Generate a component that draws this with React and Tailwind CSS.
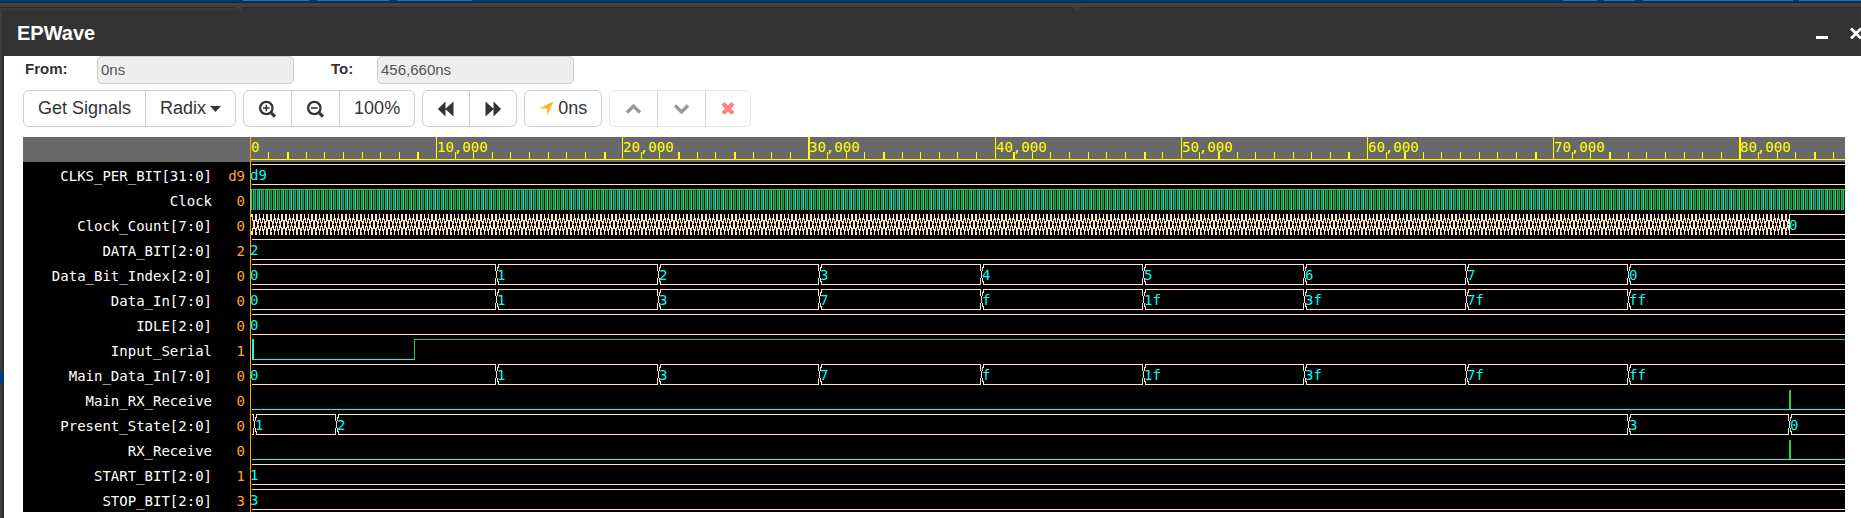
import React from "react";

const SCALE = 0.01862;
const HEADER = 25;
const ROW = 25;
const BUS = "#ffe4c4";
const LOW = "#00ffff";
const HIGH = "#32cd32";

const byteSteps = [
  [0, "0"], [13250, "1"], [21930, "3"], [30610, "7"], [39290, "f"],
  [47970, "1f"], [56650, "3f"], [65330, "7f"], [74010, "ff"],
];

const signals = [
  { name: "CLKS_PER_BIT[31:0]", value: "d9", kind: "bus", steps: [[0, "d9"]] },
  { name: "Clock", value: "0", kind: "clock" },
  { name: "Clock_Count[7:0]", value: "0", kind: "count" },
  { name: "DATA_BIT[2:0]", value: "2", kind: "bus", steps: [[0, "2"]] },
  {
    name: "Data_Bit_Index[2:0]", value: "0", kind: "bus",
    steps: [
      [0, "0"], [13250, "1"], [21930, "2"], [30610, "3"], [39290, "4"],
      [47970, "5"], [56650, "6"], [65330, "7"], [74010, "0"],
    ],
  },
  { name: "Data_In[7:0]", value: "0", kind: "bus", steps: byteSteps },
  { name: "IDLE[2:0]", value: "0", kind: "bus", steps: [[0, "0"]] },
  { name: "Input_Serial", value: "1", kind: "serial" },
  { name: "Main_Data_In[7:0]", value: "0", kind: "bus", steps: byteSteps },
  { name: "Main_RX_Receive", value: "0", kind: "pulse" },
  {
    name: "Present_State[2:0]", value: "0", kind: "bus",
    steps: [[0, ""], [240, "1"], [4620, "2"], [74010, "3"], [82690, "0"]],
  },
  { name: "RX_Receive", value: "0", kind: "pulse" },
  { name: "START_BIT[2:0]", value: "1", kind: "bus", steps: [[0, "1"]] },
  { name: "STOP_BIT[2:0]", value: "3", kind: "bus", steps: [[0, "3"]] },
];

const END_X = 4000;

function WaveText({ x, y, fill, children }) {
  return (
    <text x={x} y={y} fill={fill} className="font-['DejaVu_Sans_Mono',monospace] text-[14px]">
      {children}
    </text>
  );
}

function BusWave({ top, steps }) {
  const mid = top + 10.5;
  const hi = top + 0.5;
  const lo = top + 20.5;
  return steps.map(([time, label], i) => {
    const start = Math.floor(time * SCALE);
    const next = steps[i + 1];
    const end = next ? Math.floor(next[0] * SCALE) : END_X;
    const left = i === 0 ? `M2 ${hi}` : `M${start} ${mid}L${start + 2} ${hi + 3}V${hi}`;
    const leftLow = i === 0 ? `M2 ${lo}` : `M${start} ${mid}L${start + 2} ${lo - 3}V${lo}`;
    return (
      <g key={i}>
        <path
          d={`${left}H${end - 1}V${hi + 3}L${end + 1} ${mid}${leftLow}H${end - 1}V${lo - 3}L${end + 1} ${mid}`}
          fill="none" stroke={BUS} shapeRendering="crispEdges"
        />
        {label && <WaveText x={i === 0 ? 0 : start + 1} y={top + 16} fill={LOW}>{label}</WaveText>}
      </g>
    );
  });
}

const clockShades = [
  [1, 1], [0.1, 1], [0.95, 0], [0.5, 0], [0.75, 0.8], [0.1, 0], [0.85, 0.3], [0.55, 0.6],
];

const clockColumns = Array.from({ length: 2400 }, (_, i) => {
  const [light, hue] = clockShades[i % clockShades.length];
  const drift = 0.5 + 0.5 * Math.cos((2 * Math.PI * i) / 46);
  const w = 0.6 * hue + 0.4 * drift;
  const r = 45 * (1 - w) * light;
  const g = (205 + 25 * w) * light;
  const b = (60 + 155 * w) * light;
  return `rgb(${Math.round(r)},${Math.round(g)},${Math.round(b)})`;
});

function ClockWave({ top }) {
  return (
    <g shapeRendering="crispEdges">
      {clockColumns.map((fill, i) => (
        <rect key={i} x={i + 1} y={top + 1} width="1" height="20" fill={fill} />
      ))}
      <path d={`M1 ${top + 0.5}H${END_X}`} stroke={HIGH} />
    </g>
  );
}

function CountWave({ top }) {
  const end = 1539;
  const hi = top;
  const lo = top + 21;
  let crossings = "";
  for (let x = 4; x < end - 1; x += 3.75) {
    crossings += `M${x - 2} ${hi}V${hi + 3}L${x + 2} ${lo - 3}V${lo}`;
    crossings += `M${x + 2} ${hi}V${hi + 3}L${x - 2} ${lo - 3}V${lo}`;
  }
  return (
    <g>
      <path d={crossings} fill="none" stroke={BUS} strokeWidth="1.2" shapeRendering="crispEdges" />
      <path
        d={`M${END_X} ${top + 0.5}H${end + 0.5}V${top + 20.5}H${END_X}`}
        fill="none" stroke={BUS} shapeRendering="crispEdges"
      />
      <WaveText x={end} y={top + 16} fill={LOW}>0</WaveText>
    </g>
  );
}

function SerialWave({ top }) {
  return (
    <g fill="none" shapeRendering="crispEdges">
      <path d={`M3 ${top}V${top + 20}`} stroke={LOW} strokeWidth="2" />
      <path d={`M2 ${top + 20.5}H164`} stroke={LOW} />
      <path d={`M164.5 ${top + 21}V${top + 0.5}H${END_X}`} stroke={HIGH} />
    </g>
  );
}

function PulseWave({ top }) {
  return (
    <g fill="none" shapeRendering="crispEdges">
      <path d={`M2 ${top + 20.5}H${END_X}`} stroke={LOW} />
      <path d={`M1540 ${top + 1}V${top + 20}`} stroke={HIGH} strokeWidth="2" />
    </g>
  );
}

const waves = { bus: BusWave, clock: ClockWave, count: CountWave, serial: SerialWave, pulse: PulseWave };
const wideTicks = new Set([2, 9, 19, 23, 26, 30, 34, 41, 48, 52, 59, 62, 69, 73, 80, 84]);

function Ruler() {
  return (
    <g>
      <rect width="100%" height={HEADER} fill="#696969" />
      <path d={`M0 22.5H${END_X}`} stroke="#ffff00" shapeRendering="crispEdges" />
      {Array.from({ length: 90 }, (_, k) => {
        const wide = wideTicks.has(k);
        const x = Math.floor(k * 1000 * SCALE + 0.3);
        const major = k % 10 === 0;
        return (
          <g key={k}>
            <rect
              x={x} y={major ? 0 : 15} width={wide ? 2 : 1} height={major ? 22 : 7}
              fill="#ffff00" shapeRendering="crispEdges"
            />
            {major && <WaveText x={x + 1} y={15} fill="#ffff00">{(k * 1000).toLocaleString("en-US")}</WaveText>}
          </g>
        );
      })}
    </g>
  );
}

function Waveforms() {
  return (
    <svg className="block h-[375px] w-full" role="img" aria-label="Signal waveforms">
      <Ruler />
      {signals.map((s, i) => {
        const Wave = waves[s.kind];
        return <Wave key={s.name} top={HEADER + 2 + i * ROW} steps={s.steps} />;
      })}
      <rect width="1" height="375" fill="#ffa500" shapeRendering="crispEdges" />
    </svg>
  );
}

function ZoomIcon({ plus }) {
  return (
    <svg width="19" height="18" viewBox="0 0 19 18" fill="none" stroke="#333">
      <circle cx="8.3" cy="8" r="6.2" strokeWidth="2.3" />
      <path d="M12.6 12.4L17 16.6" strokeWidth="3" />
      <path d={plus ? "M5 8h6.6M8.3 4.7v6.6" : "M5 8h6.6"} strokeWidth="1.6" />
    </svg>
  );
}

function SkipIcon({ forward }) {
  return (
    <svg width="18" height="16" viewBox="0.5 0 18 16" fill="#333">
      <path d={forward ? "M2 .5l8 7.2V.5l7.6 7.5-7.6 7.5V8.300L2 15.500z" : "M17 .5L9 7.700V.5L1.400 8 9 15.500V8.300l8 7.200z"} />
    </svg>
  );
}

function Chevron({ down }) {
  return (
    <svg width="19" height="12" viewBox="0 0 19 12" fill="none" stroke="#333" strokeWidth="3.4">
      <path d={down ? "M3 2.500l6.500 6.400L16 2.500" : "M3 9.500l6.500-6.400L16 9.500"} />
    </svg>
  );
}

function Group({ children }) {
  return <div className="flex">{children}</div>;
}

function ToolButton({ label, disabled, children }) {
  return (
    <button
      type="button" aria-label={label} disabled={disabled}
      className="-ml-px flex h-[37px] items-center justify-center gap-1 border border-[#ccc] bg-white px-3.5 text-[18px] whitespace-nowrap text-[#333] first:ml-0 first:rounded-l-md last:rounded-r-md disabled:opacity-50"
    >
      {children}
    </button>
  );
}

function Field({ id, label, value, labelClass }) {
  return (
    <>
      <label htmlFor={id} className={`text-[15px] leading-[26px] font-bold text-[#333] ${labelClass}`}>{label}</label>
      <input
        id={id} readOnly value={value}
        className="h-7 w-[197px] rounded-[5px] border border-[#ccc] bg-[#eee] px-[3px] pb-0.5 text-[15px] text-[#555]"
      />
    </>
  );
}

export default function App() {
  return (
    <div className="flex min-h-screen flex-col overflow-hidden bg-[#3f3f3f] font-['Liberation_Sans',Arial,sans-serif]">
      <div className="flex h-0.5 bg-[#003a70]">
        <div className="ml-[243px] h-px w-[66px] bg-[#2a70a8]" />
        <div className="ml-2 h-px w-[72px] bg-[#2a70a8]" />
        <div className="ml-2 h-px w-[75px] bg-[#2a70a8]" />
        <div className="ml-auto h-px w-[34px] bg-[#2a70a8]" />
        <div className="ml-[7px] h-px w-[31px] bg-[#2a70a8]" />
        <div className="ml-2 h-px w-[150px] bg-[#2a70a8]" />
        <div className="ml-[6px] h-px w-[62px] bg-[#2a70a8]" />
      </div>
      <div className="flex h-[9px] gap-2 border-t border-[#222] bg-linear-to-b from-[#454545] to-[#363636] pt-1">
        <div className="w-[235px] border-t border-r border-[#2c2c2c]" />
        <div className="w-[830px] border-x border-t border-[#2c2c2c] bg-[#323232]" />
        <div className="flex-1 border-t border-l border-[#2c2c2c] bg-[#323232]" />
      </div>
      <div className="flex flex-1">
        <div className="w-1 shrink-0 bg-linear-to-r from-[#454442] to-[#2a2a2a] pt-[359px]">
          <div className="h-[15px] bg-[#0a3a78]" />
        </div>
        <section className="flex min-w-0 flex-1 flex-col bg-white">
          <header className="flex h-[45px] items-center justify-between overflow-hidden bg-[#333] pb-0.5 pl-[13px] text-white">
            <h1 className="text-[20px] leading-6 font-bold">EPWave</h1>
            <div className="flex items-center gap-[22px]">
              <button type="button" aria-label="Minimize">
                <svg width="12" height="12" viewBox="0 0 12 12"><path d="M0 10.500h12" stroke="#fff" strokeWidth="3" /></svg>
              </button>
              <button type="button" aria-label="Close" className="-mr-px">
                <svg width="12" height="12" viewBox="0 0 12 12"><path d="M1 1.500l10 10M11 1.500L1 11.500" stroke="#fff" strokeWidth="2.800" /></svg>
              </button>
            </div>
          </header>
          <div className="flex items-start pl-[21px]">
            <Field id="from" label="From:" value="0ns" labelClass="w-[72px]" />
            <Field id="to" label="To:" value="456,660ns" labelClass="ml-[37px] w-[46px]" />
          </div>
          <div className="mt-1.5 flex gap-[7px] pl-[19px]">
            <Group>
              <ToolButton>Get Signals</ToolButton>
              <ToolButton>
                Radix
                <svg width="11" height="6" viewBox="0 0 11 6" fill="#333"><path d="M0 0h11L5.500 6z" /></svg>
              </ToolButton>
            </Group>
            <Group>
              <ToolButton label="Zoom in"><ZoomIcon plus /></ToolButton>
              <ToolButton label="Zoom out"><ZoomIcon /></ToolButton>
              <ToolButton>100%</ToolButton>
            </Group>
            <Group>
              <ToolButton label="Backward"><SkipIcon /></ToolButton>
              <ToolButton label="Forward"><SkipIcon forward /></ToolButton>
            </Group>
            <Group>
              <ToolButton>
                <svg width="15" height="15" viewBox="0 0 15 15" fill="#ffb030"><path d="M14.500 0.300L8.200 14.700V7.600H0.600z" /></svg>
                0ns
              </ToolButton>
            </Group>
            <Group>
              <ToolButton label="Previous edge" disabled><Chevron /></ToolButton>
              <ToolButton label="Next edge" disabled><Chevron down /></ToolButton>
              <ToolButton label="Remove" disabled>
                <svg width="16" height="13" viewBox="0 0 16 13"><path d="M3 1.500l10 10M13 1.500L3 11.500" stroke="#ff0000" strokeWidth="4" /></svg>
              </ToolButton>
            </Group>
          </div>
          <div className="mt-2.5 mr-4 ml-[19px] flex bg-black">
            <div className="w-[227px] shrink-0 font-['DejaVu_Sans_Mono',monospace] text-[14px] text-white">
              <div className="h-[25px] bg-[#696969]" />
              <ul>
                {signals.map((s) => (
                  <li key={s.name} className="flex h-[25px] justify-end pr-[5px] leading-7">
                    <span>{s.name}</span>
                    <span className="w-[33px] text-right text-[#ffa72b]">{s.value}</span>
                  </li>
                ))}
              </ul>
            </div>
            <div className="min-w-0 flex-1"><Waveforms /></div>
          </div>
        </section>
      </div>
    </div>
  );
}
